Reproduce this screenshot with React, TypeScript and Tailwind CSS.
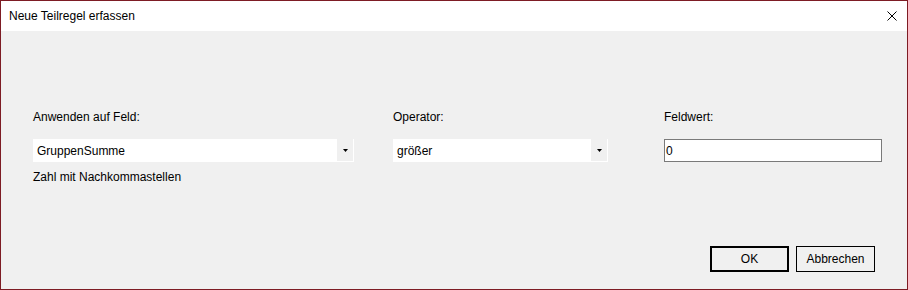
import React from "react"

const font = { fontFamily: '"Liberation Sans", Arial, sans-serif' }

function Combo({ value, width }: { value: string; width: string }) {
  return (
    <div className={`relative flex h-[23px] items-center bg-white ${width}`}>
      <span className="pl-[4px] text-[12px] leading-none text-black">{value}</span>
      <div className="absolute top-0 right-[1px] bottom-[1px] flex w-[16px] items-center justify-center bg-[#f0f0f0]">
        <svg width="5" height="3" viewBox="0 0 5 3">
          <path d="M0 0h5L2.5 3z" fill="#000" />
        </svg>
      </div>
    </div>
  )
}

export default function App() {
  return (
    <div
      className="flex h-[290px] w-[908px] flex-col border border-[#7d1c24] bg-[#f0f0f0] text-[12px] text-black"
      style={font}
    >
      <div className="flex h-[30px] shrink-0 items-center justify-between bg-white pr-[10px] pl-[8px]">
        <span className="text-[12px]">Neue Teilregel erfassen</span>
        <svg width="10" height="10" viewBox="0 0 10 10" className="mt-[-1px]">
          <path d="M0.5 0.5l9 9M9.5 0.5l-9 9" stroke="#000" strokeWidth="1" />
        </svg>
      </div>

      <div className="flex flex-1 flex-col">
        <div className="flex pt-[78px] pl-[32px]">
          <div className="flex w-[321px] flex-col">
            <span className="h-[16px] leading-[16px]">Anwenden auf Feld:</span>
            <div className="mt-[14px]">
              <Combo value="GruppenSumme" width="w-[321px]" />
            </div>
            <span className="mt-[7px] h-[16px] leading-[16px]">Zahl mit Nachkommastellen</span>
          </div>
          <div className="ml-[39px] flex w-[215px] flex-col">
            <span className="h-[16px] leading-[16px]">Operator:</span>
            <div className="mt-[14px]">
              <Combo value="größer" width="w-[215px]" />
            </div>
          </div>
          <div className="ml-[56px] flex w-[218px] flex-col">
            <span className="h-[16px] leading-[16px]">Feldwert:</span>
            <div className="mt-[14px] flex h-[23px] items-center border border-[#7a7a7a] bg-white pl-[1px]">
              <span className="leading-none">0</span>
            </div>
          </div>
        </div>

        <div className="mt-auto flex justify-end gap-[7px] pr-[32px] pb-[17px]">
          <button className="flex h-[26px] w-[79px] items-center justify-center border-2 border-black bg-[#f0f0f0] text-[12px]">
            OK
          </button>
          <button className="flex h-[26px] w-[79px] items-center justify-center border border-black bg-[#f0f0f0] text-[12px]">
            Abbrechen
          </button>
        </div>
      </div>
    </div>
  )
}
